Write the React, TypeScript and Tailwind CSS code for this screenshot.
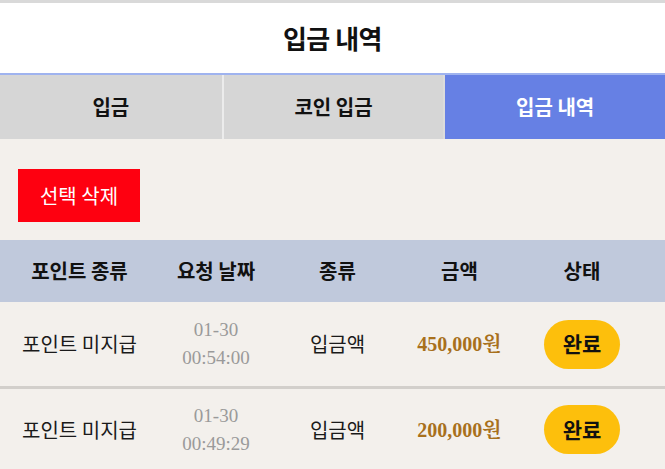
import React from "react";

const KR = "font-['Noto_Sans_CJK_KR','Noto_Sans',sans-serif]";
const SERIF = "font-['Liberation_Serif','Noto_Serif_CJK_KR','Noto_Sans_CJK_KR',serif]";

const rows = [
  { kind: "포인트 미지급", date: "01-30", time: "00:54:00", type: "입금액", amount: "450,000원", status: "완료" },
  { kind: "포인트 미지급", date: "01-30", time: "00:49:29", type: "입금액", amount: "200,000원", status: "완료" },
];

const cols = "grid grid-cols-[159px_114px_129px_115px_130px_1fr]";

export default function App() {
  return (
    <div className={`w-[665px] h-[469px] overflow-hidden bg-[#f3f0ec] ${KR}`}>
      <div className="border-t-[3px] border-[#d9d9d9] bg-white h-[73px] flex items-center justify-center">
        <h1 className="text-[26px] font-bold text-[#111] leading-none tracking-[-0.5px]">입금 내역</h1>
      </div>
      <div className="h-[2px] bg-[#9fb3ef]" />
      <div className="grid grid-cols-3 h-[64px] text-[20px] font-bold">
        <div className="bg-[#d6d6d6] flex items-center justify-center text-[#111]">입금</div>
        <div className="bg-[#d6d6d6] border-l-2 border-[#ececec] flex items-center justify-center text-[#111]">코인 입금</div>
        <div className="bg-[#6680e4] border-l-2 border-[#dcdcdc] flex items-center justify-center text-white">입금 내역</div>
      </div>
      <div className="pt-[30px] pb-[18px] pl-[18px]">
        <button className="w-[122px] h-[53px] bg-[#fe0010] text-white text-[20px] flex items-center justify-center">
          선택 삭제
        </button>
      </div>
      <div className={`${cols} h-[62px] bg-[#c0c9dc] items-center text-[20px] font-bold text-[#111]`}>
        <div className="text-center">포인트 종류</div>
        <div className="text-center">요청 날짜</div>
        <div className="text-center">종류</div>
        <div className="text-center">금액</div>
        <div className="text-center">상태</div>
        <div />
      </div>
      {rows.map((r, i) => (
        <div
          key={i}
          className={`${cols} h-[84px] items-center ${i > 0 ? "border-t-[3px] border-[#d2cfcb]" : ""}`}
        >
          <div className="text-center text-[20px] text-[#1a1a1a]">{r.kind}</div>
          <div className={`text-center text-[19px] leading-[28px] text-[#9a9a9a] ${SERIF}`}>
            <div>{r.date}</div>
            <div>{r.time}</div>
          </div>
          <div className="text-center text-[20px] text-[#1a1a1a]">{r.type}</div>
          <div className={`text-center text-[20px] font-bold text-[#a8701c] ${SERIF}`}>{r.amount}</div>
          <div className="flex justify-center">
            <span className="w-[76px] h-[49px] rounded-full bg-[#fdbf0c] flex items-center justify-center text-[21px] font-bold text-[#111]">
              {r.status}
            </span>
          </div>
          <div />
        </div>
      ))}
    </div>
  );
}
